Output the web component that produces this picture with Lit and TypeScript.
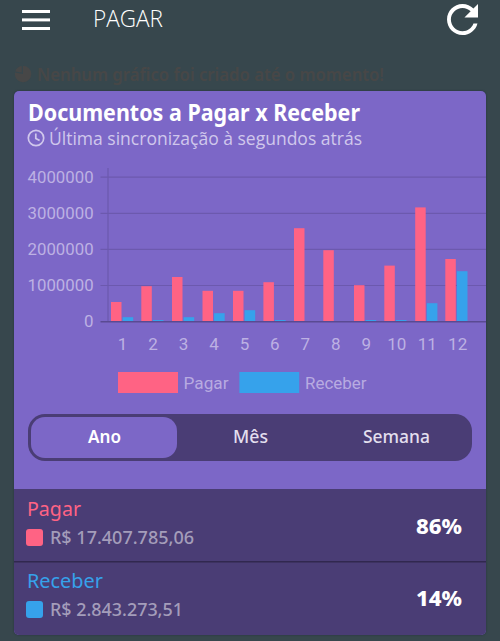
import { LitElement, html, svg, css } from "lit";
import { customElement, property, state } from "lit/decorators.js";

/** One line of text set to an exact measure. */
@customElement("fit-text")
class FitText extends LitElement {
  @property() text = "";
  @property({ type: Number }) w = 100;
  @property({ type: Number }) h = 24;
  @property({ type: Number }) base = 18;
  static styles = css`
    :host { display: block; flex: none; }
    svg { display: block; overflow: visible; }
    text { fill: currentColor; font: inherit; }
  `;
  render() {
    return html`<svg width=${this.w} height=${this.h}>
      <text x="0" y=${this.base} textLength=${this.w} lengthAdjust="spacingAndGlyphs">${this.text}</text>
    </svg>`;
  }
}

interface Month { x: number; pay: number; get: number }

const months: Month[] = [
  { x: 97, pay: 19.2, get: 4 },
  { x: 127.3, pay: 35, get: 1.2 },
  { x: 158, pay: 44.2, get: 4 },
  { x: 188.5, pay: 30.4, get: 8 },
  { x: 219, pay: 30.4, get: 11 },
  { x: 249.4, pay: 39, get: 1.2 },
  { x: 280, pay: 93, get: 0 },
  { x: 309.3, pay: 71, get: 0 },
  { x: 340, pay: 36, get: 1.2 },
  { x: 370.3, pay: 55.6, get: 1.2 },
  { x: 401.2, pay: 113.8, get: 18 },
  { x: 431.3, pay: 62.2, get: 50 },
];

@customElement("bar-chart")
class BarChart extends LitElement {
  static styles = css`
    :host { display: block; }
    svg { display: block; }
    .label { font: 17px Roboto, sans-serif; fill: #bdb1e3; }
    .legend { font: 16.5px Roboto, sans-serif; fill: #b8abe1; }
    .grid { stroke: #6c59ae; stroke-width: 1.2; }
    .zero { stroke: #5a4a92; stroke-width: 1.6; }
    .pay { fill: #ff6384; }
    .get { fill: #36a2eb; }
  `;
  render() {
    const zero = 161.2;
    return html`<svg width="472" height="245" viewBox="0 0 472 245">
      ${[4, 3, 2, 1, 0].map((m) => {
        const y = 161.2 - m * 36.1;
        return svg`
          ${m ? svg`<line class="grid" x1="86.5" x2="472" y1=${y + 0.4} y2=${y + 0.4}></line>` : null}
          <text class="label" x="79.6" y=${y + 5.9} text-anchor="end"
            textLength=${m ? 66 : 9.5} lengthAdjust="spacingAndGlyphs">${m ? m * 1000000 : 0}</text>`;
      })}
      <line class="grid" x1="94" x2="94" y1="8" y2="161"></line>
      ${months.map((d, i) => svg`
        <rect class="pay" x=${d.x} y=${zero - d.pay} width="10.5" height=${d.pay}></rect>
        <rect class="get" x=${d.x + 11.6} y=${zero - d.get} width="10.6" height=${d.get}></rect>
        <text class="label" x=${108.6 + i * 30.46} y="190.4" text-anchor="middle">${i + 1}</text>`)}
      <line class="zero" x1="86.5" x2="472" y1="161.7" y2="161.7"></line>
      <rect class="pay" x="104" y="212" width="60" height="21"></rect>
      <text class="legend" x="169.5" y="229.2" textLength="45" lengthAdjust="spacingAndGlyphs">Pagar</text>
      <rect class="get" x="225.4" y="212" width="59.8" height="21"></rect>
      <text class="legend" x="291" y="229.2" textLength="61.5" lengthAdjust="spacingAndGlyphs">Receber</text>
    </svg>`;
  }
}

@customElement("app-root")
class AppRoot extends LitElement {
  @state() private active = 0;

  private tabs = [
    { name: "Ano", w: 33 },
    { name: "Mês", w: 35 },
    { name: "Semana", w: 67 },
  ];
  private rows = [
    { name: "Pagar", w: 54, cls: "pay", value: "R$ 17.407.785,06", vw: 144, pct: "86%" },
    { name: "Receber", w: 76, cls: "get", value: "R$ 2.843.273,51", vw: 133, pct: "14%" },
  ];

  static styles = css`
    :host {
      display: block; height: 641px; overflow: hidden; box-sizing: border-box;
      background: #37474d; color: #fff;
      font-family: "Noto Sans", "Open Sans", sans-serif;
    }
    .bar { display: flex; align-items: flex-start; height: 64px; padding: 0 22px; }
    .menu { display: block; margin-top: 9px; }
    .title { margin-left: 43px; font-size: 24px; font-weight: 350; font-family: "Open Sans", sans-serif; }
    .refresh { display: block; margin: 4px 0 0 auto; }
    .empty { display: flex; gap: 5px; height: 27px; padding-left: 14px; color: #474747; font-size: 18px; font-weight: 600; }
    .empty svg { display: block; margin-top: 1px; }
    .card { width: 472px; height: 544px; margin-left: 14px; border-radius: 5px; background: #7c67c7; box-shadow: 0 0 2px rgba(20, 25, 45, .5); overflow: hidden; }
    .head { height: 69px; padding-left: 13px; box-sizing: border-box; }
    .h1 { font-size: 24px; font-weight: 700; margin-left: 1px; }
    .sync { display: flex; gap: 4px; font-size: 19px; font-weight: 400; color: #d0c7ec; font-family: "Open Sans", sans-serif; }
    .sync svg { display: block; margin-top: 1px; }
    .tabs { display: grid; grid-template-columns: repeat(3, 1fr); width: 444px; height: 47px; box-sizing: border-box; padding: 3px; margin: 9px 14px 28px; border-radius: 17px; background: #4a3d75; }
    .tab { display: flex; justify-content: center; color: #e3dfee; font-size: 18px; font-weight: 500; border-radius: 14px; }
    .tab.on { background: #7c67c7; color: #fff; font-weight: 600; }
    .row { display: flex; justify-content: space-between; height: 72px; box-sizing: border-box; padding: 0 24px 0 12px; background: #4a3d75; }
    .row + .row { height: 74px; box-shadow: inset 0 1.5px #31284f; }
    .name { font-size: 20px; margin-left: 1px; }
    .amount { display: flex; align-items: center; gap: 7px; }
    .value { font-size: 18px; font-weight: 500; color: #a49dba; }
    .swatch { width: 17px; height: 17px; border-radius: 3px; background: currentColor; }
    .pay { color: #ff6384; }
    .get { color: #36a2eb; }
    .pct { font-size: 20.5px; font-weight: 800; }
  `;

  render() {
    return html`
      <div class="bar">
        <svg class="menu" width="28" height="22" fill="#fff">
          <rect y="1" width="28" height="3"></rect>
          <rect y="9.4" width="28" height="3"></rect>
          <rect y="18" width="28" height="3"></rect>
        </svg>
        <fit-text class="title" text="PAGAR" w="70" h="36" base="27"></fit-text>
        <svg class="refresh" width="31" height="31" viewBox="4 4 16 16" fill="#fff">
          <path d="M17.65 6.35C16.2 4.9 14.21 4 12 4c-4.42 0-7.99 3.58-7.99 8s3.57 8 7.99 8c3.73 0 6.84-2.55 7.73-6h-2.08c-.82 2.33-3.04 4-5.65 4-3.31 0-6-2.69-6-6s2.69-6 6-6c1.66 0 3.14.69 4.22 1.78L13 11h7V4l-2.35 2.35z"></path>
        </svg>
      </div>
      <div class="empty">
        <svg width="18" height="18" viewBox="0 0 18 18" fill="currentColor">
          <path d="M9 9V.8A8.2 8.2 0 1 1 1 7.6z"></path>
          <path d="M7.8 .9V7.6L1.2 6.4A8.2 8.2 0 0 1 7.8 .9z"></path>
        </svg>
        <fit-text text="Nenhum gráfico foi criado até o momento!" w="347" h="24" base="17.3"></fit-text>
      </div>
      <div class="card">
        <div class="head">
          <fit-text class="h1" text="Documentos a Pagar x Receber" w="332" h="37" base="30"></fit-text>
          <div class="sync">
            <svg width="18" height="18" viewBox="0 0 18 18" fill="none" stroke="currentColor" stroke-width="1.7">
              <circle cx="9" cy="9" r="7.7"></circle>
              <path d="M8.8 4.6V9.4L12.6 11.6"></path>
            </svg>
            <fit-text text="Última sincronização à segundos atrás" w="313" h="22" base="17.4"></fit-text>
          </div>
        </div>
        <bar-chart></bar-chart>
        <div class="tabs">
          ${this.tabs.map((t, i) => html`
            <div class="tab ${i === this.active ? "on" : ""}" @click=${() => (this.active = i)}>
              <fit-text .text=${t.name} .w=${t.w} .h=${40} .base=${25.6}></fit-text>
            </div>`)}
        </div>
        ${this.rows.map((r) => html`
          <div class="row">
            <div>
              <fit-text class="name ${r.cls}" .text=${r.name} .w=${r.w} .h=${36} .base=${26.5}></fit-text>
              <div class="amount">
                <div class="swatch ${r.cls}"></div>
                <fit-text class="value" .text=${r.value} .w=${r.vw} .h=${25} .base=${18.5}></fit-text>
              </div>
            </div>
            <fit-text class="pct" .text=${r.pct} .w=${46} .h=${60} .base=${44.8}></fit-text>
          </div>`)}
      </div>
    `;
  }
}
